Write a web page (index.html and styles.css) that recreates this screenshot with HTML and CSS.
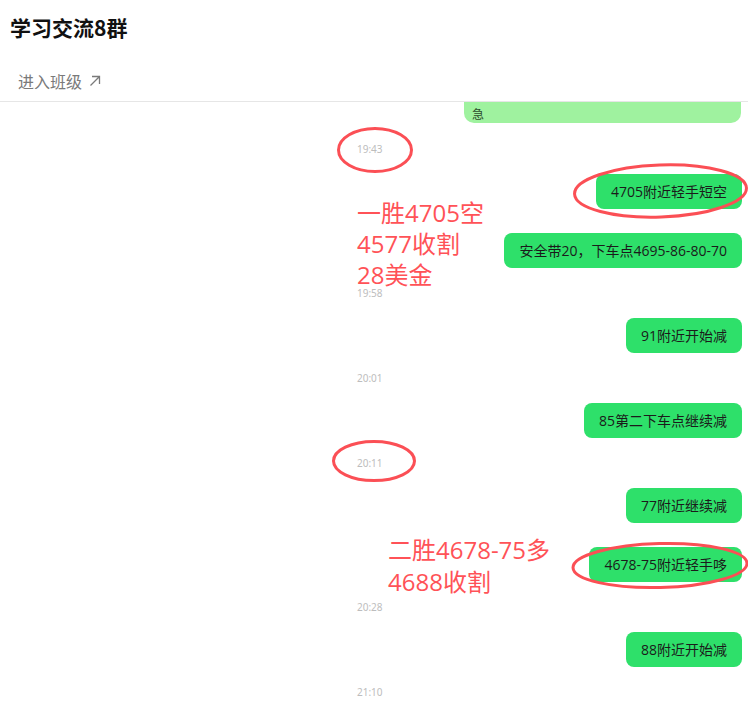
FILE: index.html
```html
<!DOCTYPE html>
<html lang="zh-CN">
<head>
<meta charset="utf-8">
<title>学习交流8群</title>
<link rel="stylesheet" href="styles.css">
</head>
<body>
<div class="page">
  <header class="header">
    <h1 class="title">学习交流8群</h1>
    <div class="enter">
      <span>进入班级</span>
      <svg class="arrow" width="12" height="12" viewBox="0 0 12 12" aria-hidden="true">
        <path d="M1.5 10.5 L10.5 1.5 M3 1.5 H10.5 V9" fill="none" stroke="#7a7a7a" stroke-width="1.3"/>
      </svg>
    </div>
  </header>

  <main class="messages">
    <div class="bubble-row"><div class="bubble light"><span class="light-text">急</span></div></div>
    <div class="time">19:43</div>
    <div class="bubble-row"><div class="bubble">4705附近轻手短空</div></div>
    <div class="bubble-row follow"><div class="bubble">安全带20，下车点4695-86-80-70</div></div>
    <div class="time">19:58</div>
    <div class="bubble-row"><div class="bubble">91附近开始减</div></div>
    <div class="time">20:01</div>
    <div class="bubble-row"><div class="bubble">85第二下车点继续减</div></div>
    <div class="time">20:11</div>
    <div class="bubble-row"><div class="bubble">77附近继续减</div></div>
    <div class="bubble-row follow"><div class="bubble">4678-75附近轻手哆</div></div>
    <div class="time">20:28</div>
    <div class="bubble-row"><div class="bubble">88附近开始减</div></div>
    <div class="time">21:10</div>
  </main>

  <div class="note note-one">一胜4705空<br>4577收割<br>28美金</div>
  <div class="note note-two">二胜4678-75多<br>4688收割</div>

  <svg class="marks" width="748" height="714" viewBox="0 0 748 714" aria-hidden="true">
    <ellipse cx="375" cy="150" rx="36.5" ry="21.5" />
    <ellipse cx="660.5" cy="191" rx="86" ry="26" transform="rotate(-2 660.5 191)" />
    <ellipse cx="374" cy="461" rx="40.5" ry="19.5" />
    <ellipse cx="660" cy="565.5" rx="87" ry="22" transform="rotate(-1.5 660 565.5)" />
  </svg>
</div>
</body>
</html>
```

FILE: styles.css
```css
html, body {
  margin: 0;
  padding: 0;
  background: #ffffff;
}

body {
  font-family: "Open Sans", "Noto Sans CJK SC", sans-serif;
  color: #1a1a1a;
}

.page {
  position: relative;
  width: 748px;
  height: 714px;
  overflow: hidden;
}

.header {
  padding: 13px 10px 9px;
  border-bottom: 1px solid #e6e6e6;
}

.title {
  margin: 0;
  font-family: "Noto Sans CJK SC", sans-serif;
  font-size: 21px;
  line-height: 28px;
  font-weight: 700;
  color: #111111;
}

.enter {
  margin-top: 29px;
  padding-left: 8px;
  display: flex;
  align-items: center;
  gap: 7px;
  font-family: "Noto Sans CJK SC", sans-serif;
  font-size: 16px;
  line-height: 22px;
  color: #7a7a7a;
}

.arrow {
  display: block;
}

.messages {
  display: flex;
  flex-direction: column;
  gap: 15px;
}

.bubble-row {
  display: flex;
  justify-content: flex-end;
  padding-right: 6px;
}

.bubble-row.follow {
  margin-top: 9px;
}

.bubble {
  height: 35px;
  padding: 0 15px;
  border-radius: 8px;
  background: #2ee06a;
  font-size: 14px;
  line-height: 35px;
  color: #1b1b1b;
  white-space: nowrap;
}

.bubble.light {
  width: 277px;
  height: 21px;
  padding: 0 0 0 8px;
  margin-right: 1px;
  margin-bottom: 1px;
  border-radius: 0 0 10px 10px;
  background: #9ff29f;
  box-sizing: border-box;
  display: flex;
  align-items: flex-end;
}

.light-text {
  font-family: "Noto Sans CJK SC", sans-serif;
  font-size: 12px;
  line-height: 18px;
  color: #2c4a2c;
}

.time {
  height: 20px;
  padding-left: 357px;
  font-family: "Noto Sans", sans-serif;
  font-size: 10px;
  line-height: 20px;
  color: #bdbdbd;
}

.note {
  position: absolute;
  font-size: 24px;
  line-height: 31px;
  color: #ff5257;
  white-space: nowrap;
}

.note-one {
  left: 357px;
  top: 197px;
}

.note-two {
  left: 388px;
  top: 534px;
  line-height: 32px;
}

.marks {
  position: absolute;
  left: 0;
  top: 0;
  pointer-events: none;
}

.marks ellipse {
  fill: none;
  stroke: #fb4f55;
  stroke-width: 3;
}
```
